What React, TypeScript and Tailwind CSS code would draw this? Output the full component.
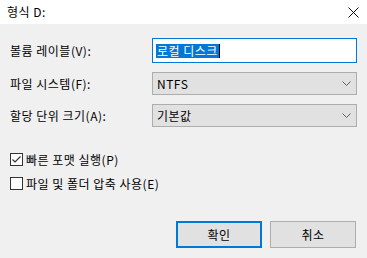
import React from 'react';

const font = { fontFamily: '"Noto Sans CJK KR", "Noto Sans", sans-serif' };

const Chevron = () => (
  <svg width="9" height="5" viewBox="0 0 9 5" className="shrink-0">
    <path d="M0.5 0.5 L4.5 4.5 L8.5 0.5" fill="none" stroke="#606060" strokeWidth="1" />
  </svg>
);

const Combo = ({ value }: { value: string }) => (
  <div className="flex h-[23px] w-[205px] items-center justify-between border border-[#adadad] bg-[#e1e1e1] pl-[4px] pr-[5px]">
    <span className="leading-none">{value}</span>
    <Chevron />
  </div>
);

const Check = ({ checked, label }: { checked?: boolean; label: string }) => (
  <div className="flex h-[13px] items-center gap-[3px]">
    <div className="flex h-[13px] w-[13px] items-center justify-center border border-[#333333] bg-white">
      {checked && (
        <svg width="11" height="11" viewBox="0 0 11 11">
          <path d="M1.5 5.5 L4 8 L9.5 2.5" fill="none" stroke="#333333" strokeWidth="1.2" />
        </svg>
      )}
    </div>
    <span className="leading-none">{label}</span>
  </div>
);

export default function App() {
  return (
    <div className="h-[258px] w-[367px] overflow-hidden bg-[#f0f0f0] text-[12px] tracking-[0.5px] text-black" style={font}>
      <div className="flex h-[24px] items-center justify-between bg-white pl-[7px] pr-[8px]">
        <span className="leading-none">형식 D:</span>
        <svg width="11" height="11" viewBox="0 0 11 11">
          <path d="M0.5 0.5 L10.5 10.5 M10.5 0.5 L0.5 10.5" stroke="#111111" strokeWidth="1" />
        </svg>
      </div>

      <div className="flex flex-col px-[10px] pt-[14px]">
        <div className="flex flex-col gap-[9px]">
          <div className="flex items-center">
            <span className="w-[142px] leading-none">볼륨 레이블(V):</span>
            <div className="flex h-[25px] w-[205px] items-center border border-[#0078d7] bg-white pl-[3px]">
              <span className="flex h-[14px] items-center bg-[#0078d7] px-[1px] leading-none text-white">로컬 디스크</span>
              <span className="h-[14px] w-[1px] bg-black" />
            </div>
          </div>
          <div className="flex items-center">
            <span className="w-[142px] leading-none">파일 시스템(F):</span>
            <Combo value="NTFS" />
          </div>
          <div className="flex items-center">
            <span className="w-[142px] leading-none">할당 단위 크기(A):</span>
            <Combo value="기본값" />
          </div>
        </div>

        <div className="mt-[26px] flex flex-col gap-[11px]">
          <Check checked label="빠른 포맷 실행(P)" />
          <Check label="파일 및 폴더 압축 사용(E)" />
        </div>

        <div className="mt-[31px] flex justify-end gap-[8px] pr-[1px]">
          <button className="flex h-[27px] w-[86px] items-center justify-center border-2 border-[#0078d7] bg-[#e1e1e1] leading-none">
            확인
          </button>
          <button className="flex h-[27px] w-[86px] items-center justify-center border border-[#adadad] bg-[#e1e1e1] leading-none">
            취소
          </button>
        </div>
      </div>
    </div>
  );
}
